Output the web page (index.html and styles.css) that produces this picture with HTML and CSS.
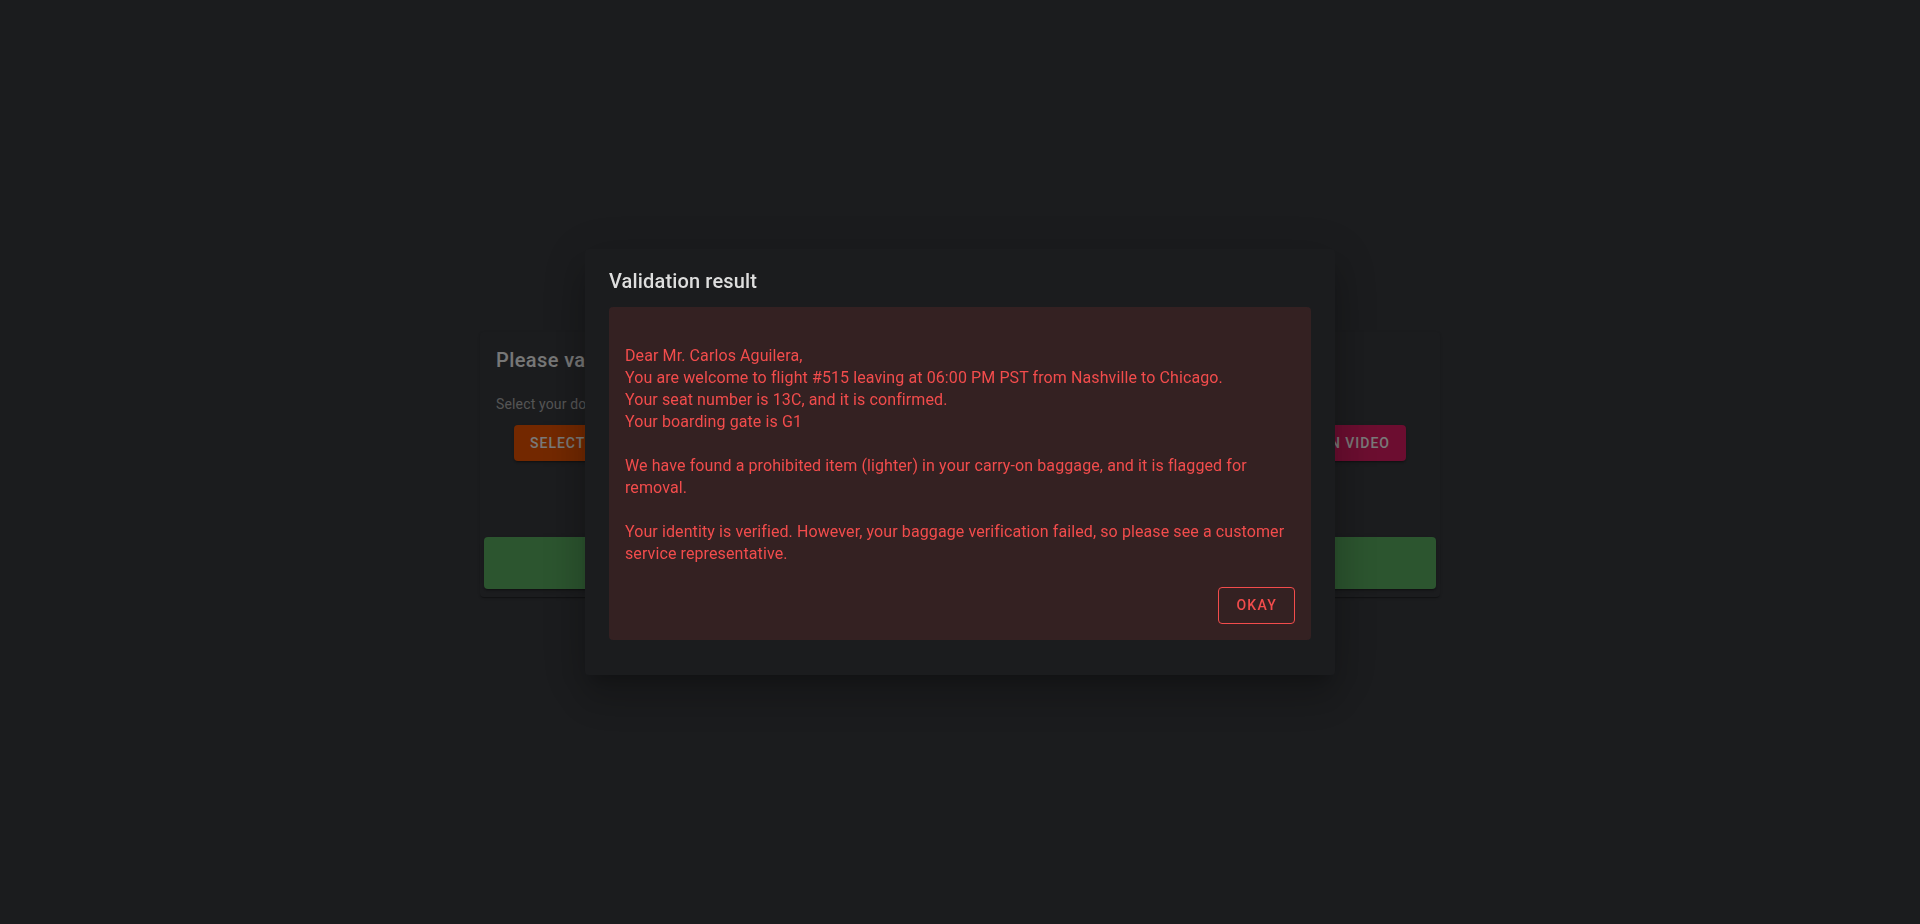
FILE: index.html
```html
<!DOCTYPE html>
<html lang="en">
<head>
<meta charset="utf-8">
<title>Validation result</title>
<link rel="stylesheet" href="styles.css">
</head>
<body>
<main class="page">
  <section class="card">
    <div class="card-body">
      <h2 class="card-title">Please validate your identity and baggage</h2>
      <p class="card-sub">Select your document scan and your baggage scan video to start the validation</p>
      <div class="card-actions">
        <button class="btn btn-orange">Select document scan</button>
        <button class="btn btn-pink">Select baggage scan video</button>
      </div>
    </div>
    <button class="submit-bar" aria-label="Validate"></button>
  </section>
</main>

<div class="backdrop"></div>

<div class="dialog-wrap">
  <div class="dialog" role="dialog" aria-labelledby="dlg-title">
    <h2 class="dialog-title" id="dlg-title">Validation result</h2>
    <div class="result">
      <p class="result-text">Dear Mr. Carlos Aguilera,<br>You are welcome to flight #515 leaving at 06:00 PM PST from Nashville to Chicago.<br>Your seat number is 13C, and it is confirmed.<br>Your boarding gate is G1<br><br>We have found a prohibited item (lighter) in your carry-on baggage, and it is flagged for removal.<br><br>Your identity is verified. However, your baggage verification failed, so please see a customer service representative.</p>
      <div class="result-actions">
        <button class="btn-outline">Okay</button>
      </div>
    </div>
  </div>
</div>
</body>
</html>
```

FILE: styles.css
```css
* { box-sizing: border-box; }

html, body {
  margin: 0;
  height: 100%;
}

body {
  background: #36383c;
  font-family: Roboto, "Noto Sans", "Liberation Sans", sans-serif;
  color: #eeeeee;
  overflow: hidden;
}

.page {
  height: 100%;
  display: flex;
  align-items: center;
  justify-content: center;
  padding-top: 5px;
}

.card {
  width: 960px;
  background: #37393d;
  border-radius: 4px;
  box-shadow: 0 2px 1px -1px rgba(0,0,0,0.2), 0 1px 1px 0 rgba(0,0,0,0.14), 0 1px 3px 0 rgba(0,0,0,0.12);
  padding: 12px 4px 8px;
  display: flex;
  flex-direction: column;
}

.card-body {
  padding: 0 12px;
}

.card-title {
  margin: 0;
  font-size: 20px;
  font-weight: 500;
  line-height: 32px;
  letter-spacing: 0.4px;
  color: #eeeeee;
  white-space: nowrap;
  overflow: hidden;
}

.card-sub {
  margin: 18px 0 0;
  font-size: 14px;
  line-height: 20px;
  letter-spacing: 0.15px;
  color: #aaaaaa;
}

.card-actions {
  margin-top: 11px;
  padding: 0 18px;
  display: flex;
  justify-content: space-between;
}

.btn {
  border: 0;
  border-radius: 4px;
  height: 36px;
  padding: 6px 16px;
  font-family: inherit;
  font-size: 14px;
  font-weight: 500;
  letter-spacing: 1px;
  text-transform: uppercase;
  color: #f2f2f2;
  box-shadow: 0 3px 1px -2px rgba(0,0,0,0.2), 0 2px 2px 0 rgba(0,0,0,0.14), 0 1px 5px 0 rgba(0,0,0,0.12);
}

.btn-orange { background: #e65100; }
.btn-pink { background: #d81b60; }

.submit-bar {
  margin-top: 76px;
  height: 52px;
  width: 100%;
  border: 0;
  border-radius: 4px;
  background: #58aa5e;
  box-shadow: 0 3px 1px -2px rgba(0,0,0,0.2), 0 2px 2px 0 rgba(0,0,0,0.14), 0 1px 5px 0 rgba(0,0,0,0.12);
}

.backdrop {
  position: fixed;
  inset: 0;
  background: rgba(0,0,0,0.5);
}

.dialog-wrap {
  position: fixed;
  inset: 0;
  display: flex;
  align-items: center;
  justify-content: center;
}

.dialog {
  width: 750px;
  background: #1b1c1e;
  border-radius: 4px;
  padding: 16px 24px 35px;
  box-shadow: 0 11px 15px -7px rgba(0,0,0,0.2), 0 24px 38px 3px rgba(0,0,0,0.14), 0 9px 46px 8px rgba(0,0,0,0.12);
}

.dialog-title {
  margin: 0;
  font-size: 20px;
  font-weight: 500;
  line-height: 32px;
  letter-spacing: 0.15px;
  color: #dedede;
}

.result {
  margin-top: 10px;
  background: #342122;
  border-radius: 4px;
  padding: 16px;
  color: #f24c4c;
}

.result-text {
  margin: 22px 0;
  font-size: 16px;
  line-height: 22px;
  letter-spacing: 0.1px;
}

.result-actions {
  display: flex;
  justify-content: flex-end;
}

.btn-outline {
  background: transparent;
  border: 1px solid #f24c4c;
  border-radius: 4px;
  color: #f24c4c;
  font-family: inherit;
  font-size: 14px;
  font-weight: 500;
  line-height: 24.5px;
  letter-spacing: 1.25px;
  text-transform: uppercase;
  padding: 5px 17px;
  min-width: 64px;
}
```
